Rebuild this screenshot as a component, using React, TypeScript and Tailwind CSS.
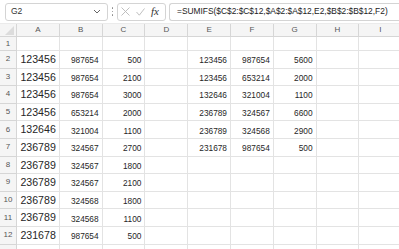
import React from "react";

const cols = ["A", "B", "C", "D", "E", "F", "G", "H", "I"];

// rows 2..12 — column A uses a larger font in the sheet
const data: (string | number)[][] = [
  [123456, 987654, 500, "", 123456, 987654, 5600],
  [123456, 987654, 2100, "", 123456, 653214, 2000],
  [123456, 987654, 3000, "", 132646, 321004, 1100],
  [123456, 653214, 2000, "", 236789, 324567, 6600],
  [132646, 321004, 1100, "", 236789, 324568, 2900],
  [236789, 324567, 2700, "", 231678, 987654, 500],
  [236789, 324567, 1800],
  [236789, 324567, 2100],
  [236789, 324568, 1800],
  [236789, 324568, 1100],
  [231678, 987654, 500],
];

function Cell({ value, big }: { value?: string | number; big?: boolean }) {
  return (
    <div
      className={`w-[42.8px] shrink-0 h-full border-r border-b border-[#e3e3e3] flex items-end justify-end pr-[3px] pb-[3px] text-[#262626] leading-none ${
        big ? "text-[10.6px]" : "text-[8.3px]"
      }`}
    >
      {value ?? ""}
    </div>
  );
}

export default function App() {
  return (
    <div className="w-[399px] h-[249px] overflow-hidden bg-white font-['Liberation_Sans',Arial,sans-serif]">
      {/* Formula bar */}
      <div className="h-[23px] flex items-center pl-[5px] bg-white">
        <div className="w-[103px] h-[18px] border border-[#d4d4d4] rounded-[3px] flex items-center justify-between px-[5px]">
          <span className="text-[8.5px] text-[#333]">G2</span>
          <svg width="8" height="5" viewBox="0 0 8 5" className="mr-[1px]">
            <path d="M1 1 L4 4 L7 1" fill="none" stroke="#666" strokeWidth="1" />
          </svg>
        </div>
        <div className="w-[9px] flex flex-col items-center gap-[2px]">
          <span className="w-[1.5px] h-[1.5px] bg-[#888] rounded-full" />
          <span className="w-[1.5px] h-[1.5px] bg-[#888] rounded-full" />
          <span className="w-[1.5px] h-[1.5px] bg-[#888] rounded-full" />
        </div>
        <div className="w-[49px] h-[18px] border border-[#d4d4d4] rounded-[3px] flex items-center pl-[3px] gap-[6px]">
          <svg width="9" height="9" viewBox="0 0 9 9">
            <path d="M0.5 0.5 L8.5 8.5 M8.5 0.5 L0.5 8.5" stroke="#b8b8b8" strokeWidth="0.9" />
          </svg>
          <svg width="9" height="8" viewBox="0 0 9 8">
            <path d="M0.5 4 L3.3 7.2 L8.5 0.5" fill="none" stroke="#b8b8b8" strokeWidth="0.9" />
          </svg>
          <span className="font-['Liberation_Serif',serif] italic text-[11px] text-[#333] leading-none">
            fx
          </span>
        </div>
        <div className="flex-1 ml-[3px] h-[18px] border border-r-0 border-[#d4d4d4] rounded-l-[3px] flex items-center pl-[7px] text-[8.4px] text-[#222] whitespace-nowrap overflow-hidden">
          =SUMIFS($C$2:$C$12,$A$2:$A$12,E2,$B$2:$B$12,F2)
        </div>
      </div>

      {/* Column headers */}
      <div className="h-[14px] flex bg-[#f5f5f5] border-t border-[#ebebeb]">
        <div className="w-[17px] shrink-0 h-full border-r border-b border-[#d6d6d6] relative">
          <svg width="9" height="9" viewBox="0 0 9 9" className="absolute right-[2px] bottom-[1px]">
            <path d="M9 0 L9 9 L0 9 Z" fill="#dcdcdc" />
          </svg>
        </div>
        {cols.map((c) => (
          <div
            key={c}
            className="w-[42.8px] shrink-0 h-full border-r border-b border-[#d6d6d6] flex items-center justify-center text-[8px] text-[#555]"
          >
            {c}
          </div>
        ))}
      </div>

      {/* Row 1 */}
      <div className="h-[14px] flex">
        <div className="w-[17px] shrink-0 h-full bg-[#f5f5f5] border-r border-b border-[#d6d6d6] flex items-center justify-center text-[8px] text-[#555]">
          1
        </div>
        {cols.map((c) => (
          <Cell key={c} />
        ))}
      </div>

      {/* Rows 2..13 */}
      {[...data, []].map((row, i) => (
        <div key={i} className="h-[17.6px] flex">
          <div className="w-[17px] shrink-0 h-full bg-[#f5f5f5] border-r border-b border-[#d6d6d6] flex items-center justify-center text-[8px] text-[#555]">
            {i + 2}
          </div>
          {cols.map((c, j) => (
            <Cell key={c} value={row[j]} big={j === 0} />
          ))}
        </div>
      ))}
    </div>
  );
}
